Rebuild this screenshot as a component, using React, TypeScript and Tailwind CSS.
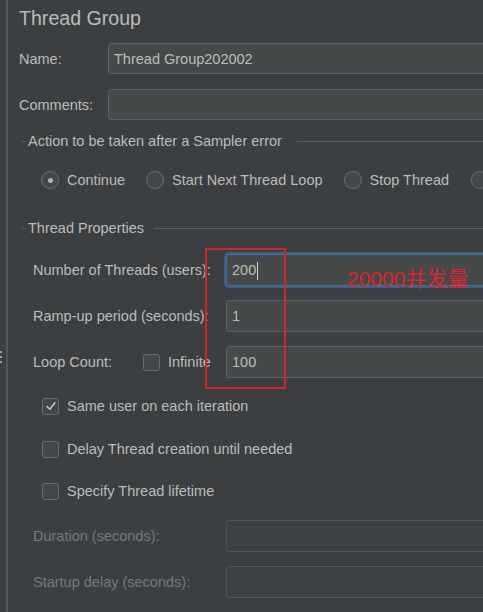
import React from "react";

const font = { fontFamily: '"Liberation Sans", Arial, sans-serif' };

function Radio({ checked = false }: { checked?: boolean }) {
  return (
    <span className="flex h-[18px] w-[18px] flex-none items-center justify-center rounded-full border border-[#6a6d6f] bg-[#43474a]">
      {checked && <span className="h-[5px] w-[5px] rounded-full bg-[#b0b2b4]" />}
    </span>
  );
}

function Checkbox({ checked = false }: { checked?: boolean }) {
  return (
    <span className="flex h-[17px] w-[17px] flex-none items-center justify-center rounded-[3px] border border-[#686b6d] bg-[#43474a]">
      {checked && (
        <svg width="12" height="12" viewBox="0 0 12 12" fill="none">
          <path d="M2 6.5 L4.8 9.2 L10 2.8" stroke="#c4c6c8" strokeWidth="1.6" strokeLinecap="round" strokeLinejoin="round" />
        </svg>
      )}
    </span>
  );
}

function SectionTitle({ text, gap }: { text: string; gap: string }) {
  return (
    <div className="flex h-[20px] items-center">
      <span className="ml-[3px] h-px w-[4px] bg-[#5b5e60]" />
      <span className="ml-[2px] pt-[2px] text-[#bbbbbb]">{text}</span>
      <span className={`h-px flex-1 bg-[#5b5e60] ${gap}`} />
    </div>
  );
}

function Field({ value, focused = false }: { value?: string; focused?: boolean }) {
  return (
    <div
      className={`flex h-[32px] flex-1 items-center rounded-[3px] border bg-[#45494a] pl-[5px] pt-[2px] text-[#bbbbbb] ${
        focused ? "border-[#4a6f97] shadow-[0_0_0_2px_#3d6185]" : "border-[#5e6162]"
      }`}
    >
      {value}
      {focused && <span className="ml-px h-[18px] w-px bg-[#d0d0d0]" />}
    </div>
  );
}

export default function App() {
  return (
    <div className="relative flex h-[612px] w-[483px] overflow-hidden bg-[#3c3f41] text-[14.5px]" style={font}>
      <div className="relative w-[6px] flex-none">
        <div className="absolute left-0 top-[351px] flex flex-col gap-[3px]">
          <span className="h-[2px] w-[2px] bg-[#a0a0a0]" />
          <span className="h-[2px] w-[2px] bg-[#a0a0a0]" />
          <span className="h-[2px] w-[2px] bg-[#a0a0a0]" />
        </div>
      </div>
      <div className="w-[2px] flex-none bg-[#535658]" />
      <div className="w-[540px] flex-none pl-[11px]">
        <div className="h-[34px] pt-px text-[19.6px] leading-[34px] text-[#bbbbbb]">Thread Group</div>

        <div className="mt-[9px] flex h-[31px] items-center">
          <span className="w-[89px] flex-none pt-[2px] text-[#bbbbbb]">Name:</span>
          <div className="flex h-[31px] flex-1 items-center rounded-[3px] border border-[#5e6162] bg-[#45494a] pl-[5px] pt-[2px] text-[#bbbbbb]">
            Thread Group202002
          </div>
        </div>

        <div className="mt-[15px] flex h-[31px] items-center">
          <span className="w-[89px] flex-none pt-[2px] text-[#bbbbbb]">Comments:</span>
          <div className="h-[31px] flex-1 rounded-[3px] border border-[#5e6162] bg-[#45494a]" />
        </div>

        <div className="mt-[11px]">
          <SectionTitle text="Action to be taken after a Sampler error" gap="ml-[15px]" />
        </div>

        <div className="mt-[19px] flex h-[20px] items-center pl-[22px] text-[#bbbbbb]">
          <Radio checked />
          <span className="ml-[8px] pt-[2px]">Continue</span>
          <span className="ml-[21px]">
            <Radio />
          </span>
          <span className="ml-[8px] pt-[2px]">Start Next Thread Loop</span>
          <span className="ml-[21px]">
            <Radio />
          </span>
          <span className="ml-[8px] pt-[2px]">Stop Thread</span>
          <span className="ml-[22px]">
            <Radio />
          </span>
        </div>

        <div className="mt-[28px]">
          <SectionTitle text="Thread Properties" gap="ml-[10px]" />
        </div>

        <div className="pl-[14px]">
          <div className="mt-[16px] flex h-[32px] items-center">
            <span className="w-[193px] flex-none pt-[2px] text-[#bbbbbb]">Number of Threads (users):</span>
            <Field value="200" focused />
          </div>
          <div className="mt-[14px] flex h-[32px] items-center">
            <span className="w-[193px] flex-none pt-[2px] text-[#bbbbbb]">Ramp-up period (seconds):</span>
            <Field value="1" />
          </div>
          <div className="mt-[14px] flex h-[32px] items-center">
            <div className="flex w-[193px] flex-none items-center text-[#bbbbbb]">
              <span className="w-[110px] pt-[2px]">Loop Count:</span>
              <Checkbox />
              <span className="ml-[8px] pt-[2px]">Infinite</span>
            </div>
            <Field value="100" />
          </div>
        </div>

        <div className="pl-[23px] text-[#bbbbbb]">
          <div className="mt-[18px] flex h-[20px] items-center">
            <Checkbox checked />
            <span className="ml-[8px] pt-[2px]">Same user on each iteration</span>
          </div>
          <div className="mt-[23px] flex h-[20px] items-center">
            <Checkbox />
            <span className="ml-[8px] pt-[2px]">Delay Thread creation until needed</span>
          </div>
          <div className="mt-[22px] flex h-[20px] items-center">
            <Checkbox />
            <span className="ml-[8px] pt-[2px]">Specify Thread lifetime</span>
          </div>
        </div>

        <div className="pl-[14px]">
          <div className="mt-[19px] flex h-[32px] items-center">
            <span className="w-[193px] flex-none pt-[2px] text-[#767879]">Duration (seconds):</span>
            <div className="h-[32px] flex-1 rounded-[3px] border border-[#535658] bg-[#3e4143]" />
          </div>
          <div className="mt-[14px] flex h-[32px] items-center">
            <span className="w-[193px] flex-none pt-[2px] text-[#767879]">Startup delay (seconds):</span>
            <div className="h-[32px] flex-1 rounded-[3px] border border-[#535658] bg-[#3e4143]" />
          </div>
        </div>
      </div>

      <div className="absolute left-[205px] top-[248px] h-[141px] w-[81px] border-2 border-[#d3232c]" />
      <div
        className="absolute left-[347px] top-[266px] text-[21px] leading-[26px] text-[#d9262f]"
        style={{ fontFamily: '"Liberation Sans", "Noto Sans CJK SC", sans-serif' }}
      >
        20000并发量
      </div>
    </div>
  );
}
